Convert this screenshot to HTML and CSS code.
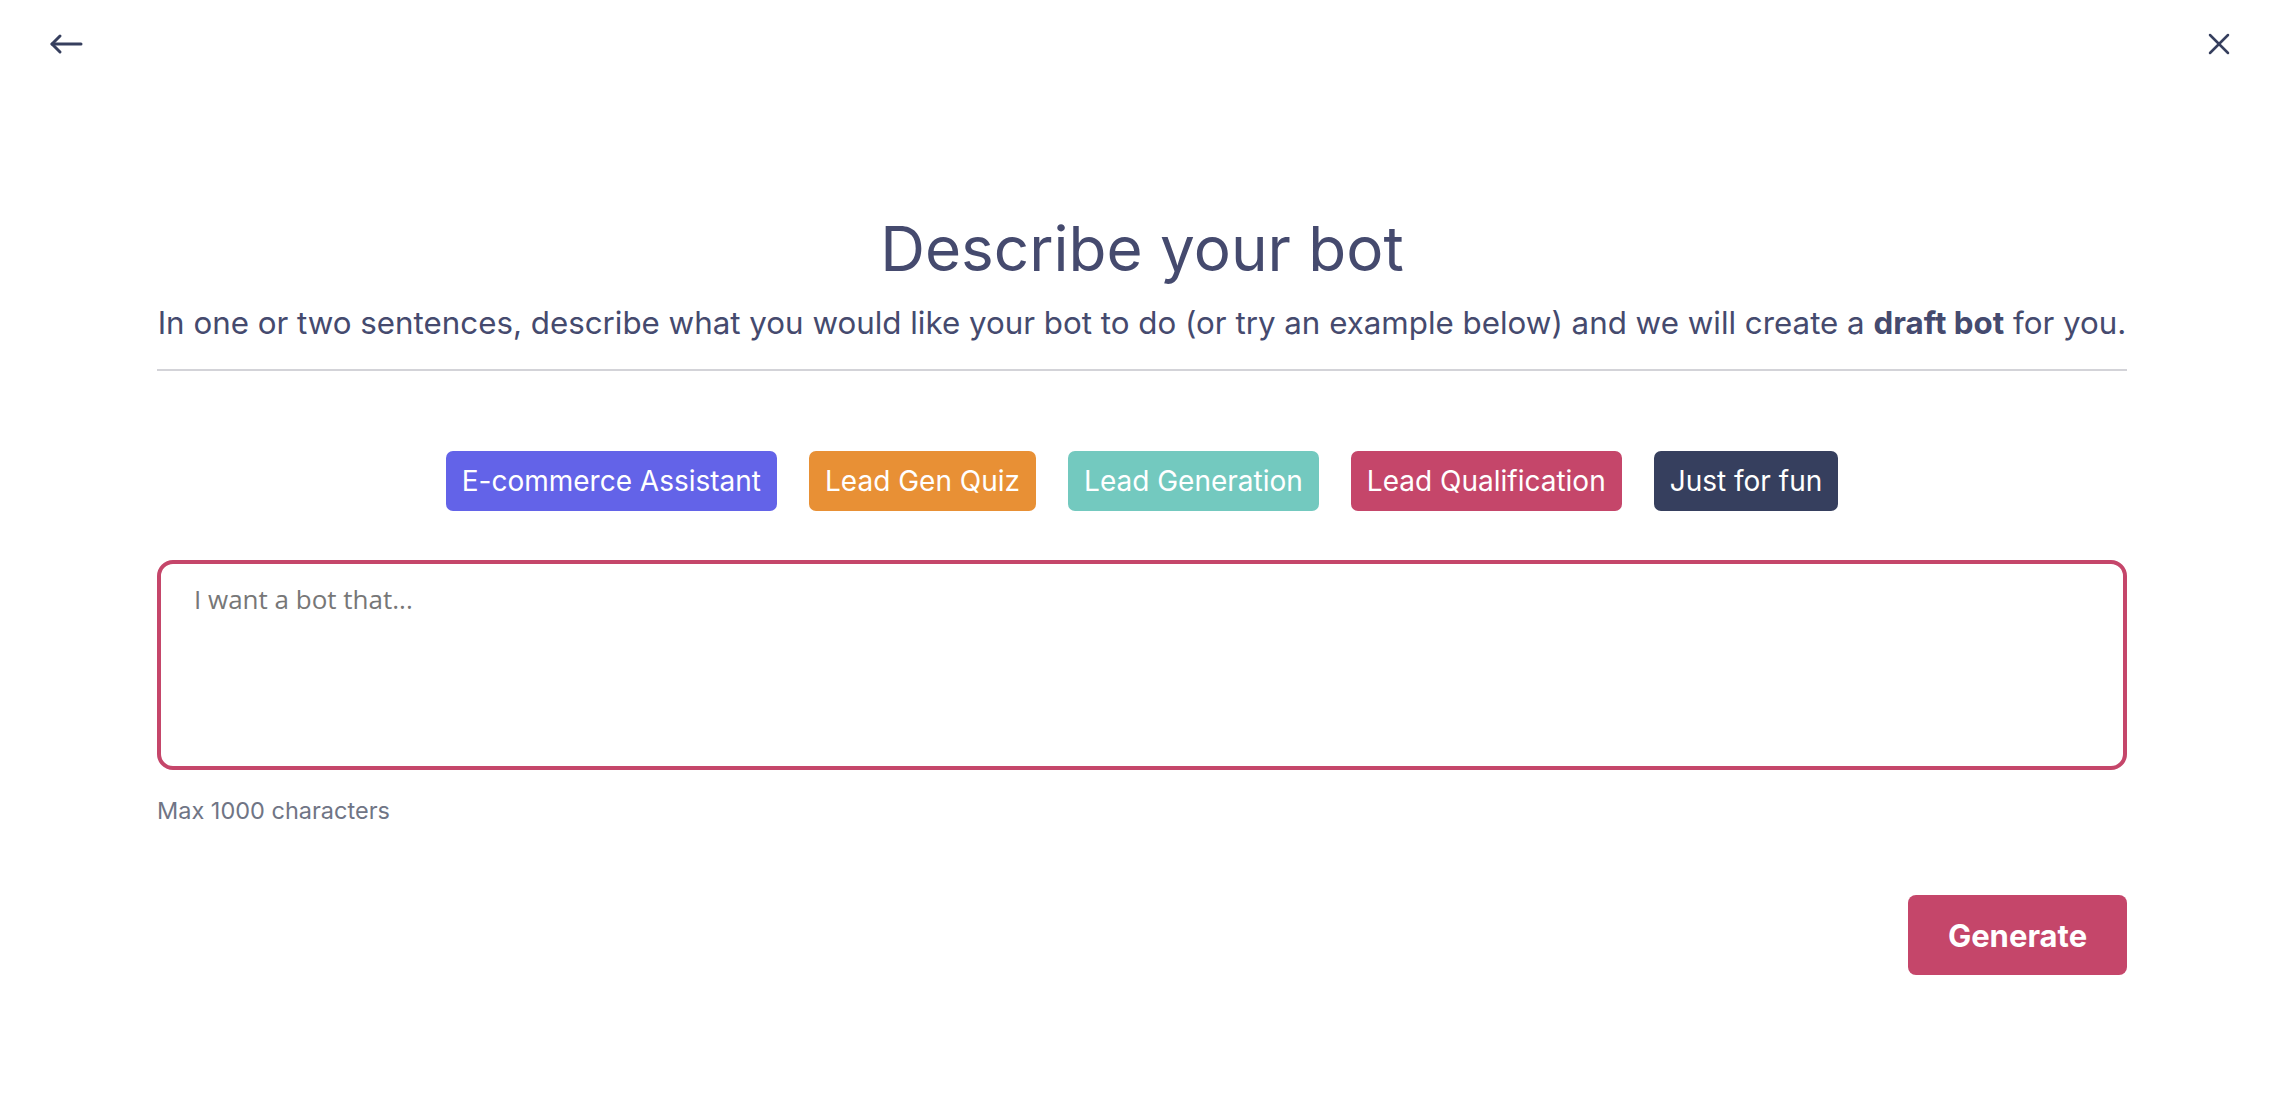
FILE: index.html
```html
<!DOCTYPE html>
<html lang="en">
<head>
<meta charset="UTF-8">
<meta name="viewport" content="width=device-width, initial-scale=1.0">
<title>Describe your bot</title>
<link rel="stylesheet" href="styles.css">
</head>
<body>

<header class="top-bar">
  <button class="icon-btn back-btn" aria-label="Back">
    <svg width="34" height="22" viewBox="0 0 34 22" fill="none" stroke="#363f5e" stroke-width="3" stroke-linecap="round" stroke-linejoin="round">
      <path d="M32 11H3"/>
      <path d="M11 3L3 11L11 19"/>
    </svg>
  </button>
  <button class="icon-btn close-btn" aria-label="Close">
    <svg width="22" height="22" viewBox="0 0 22 22" fill="none" stroke="#363f5e" stroke-width="2.5" stroke-linecap="round">
      <path d="M2 2L20 20"/>
      <path d="M20 2L2 20"/>
    </svg>
  </button>
</header>

<main class="wizard">
  <h1>Describe your bot</h1>
  <p class="lead">In one or two sentences, describe what you would like your bot to do (or try an example below) and we will create a <strong>draft bot</strong> for you.</p>
  <hr class="divider">

  <div class="examples">
    <button class="chip chip-purple">E-commerce Assistant</button>
    <button class="chip chip-orange">Lead Gen Quiz</button>
    <button class="chip chip-teal">Lead Generation</button>
    <button class="chip chip-pink">Lead Qualification</button>
    <button class="chip chip-navy">Just for fun</button>
  </div>

  <textarea class="prompt" placeholder="I want a bot that..." maxlength="1000"></textarea>
  <div class="hint">Max 1000 characters</div>

  <div class="actions">
    <button class="generate-btn">Generate</button>
  </div>
</main>

</body>
</html>
```

FILE: styles.css
```css
body {
  font-family: Inter, "DejaVu Sans", sans-serif;
  background-color: #ffffff;
  color: #454a6e;
  margin: 0;
}
button {
  font-family: inherit;
  cursor: pointer;
}
.top-bar {
  display: flex;
  justify-content: space-between;
  align-items: center;
  height: 88px;
  padding: 0 54px 0 49px;
}
.icon-btn {
  background: none;
  border: none;
  padding: 0;
  display: flex;
}
.wizard {
  display: flex;
  flex-direction: column;
  margin: 0 157px;
  padding-top: 124px;
}
.wizard h1 {
  font-size: 62px;
  font-weight: 400;
  line-height: 74px;
  text-align: center;
  margin: 0 0 17px;
  color: #454a6e;
}
.lead {
  font-size: 31.3px;
  line-height: 40px;
  text-align: center;
  margin: 0;
  color: #454a6e;
}
.lead strong {
  font-weight: 700;
}
.divider {
  border: none;
  height: 2px;
  background-color: #d3d3d8;
  margin: 26px 0 80px;
}
.examples {
  display: flex;
  justify-content: center;
  gap: 32px;
  margin-bottom: 49px;
}
.chip {
  height: 60px;
  padding: 0 16px;
  border: none;
  border-radius: 7px;
  color: #ffffff;
  font-size: 28px;
}
.chip-purple { background-color: #6363e8; }
.chip-orange { background-color: #e89035; }
.chip-teal { background-color: #73c9bf; }
.chip-pink { background-color: #c5466a; }
.chip-navy { background-color: #363f5e; }
.prompt {
  height: 210px;
  box-sizing: border-box;
  border: 4px solid #c5466a;
  border-radius: 16px;
  padding: 17px 33px;
  font-family: "Open Sans", sans-serif;
  font-size: 26px;
  color: #333;
  resize: none;
  outline: none;
}
.prompt::placeholder {
  color: #777777;
}
.hint {
  font-size: 23.5px;
  line-height: 30px;
  color: #707585;
  margin-top: 26px;
}
.actions {
  display: flex;
  justify-content: flex-end;
  margin-top: 69px;
}
.generate-btn {
  width: 219px;
  height: 80px;
  border: none;
  border-radius: 8px;
  background-color: #c5466a;
  color: #ffffff;
  font-size: 31px;
  font-weight: 700;
}
```
